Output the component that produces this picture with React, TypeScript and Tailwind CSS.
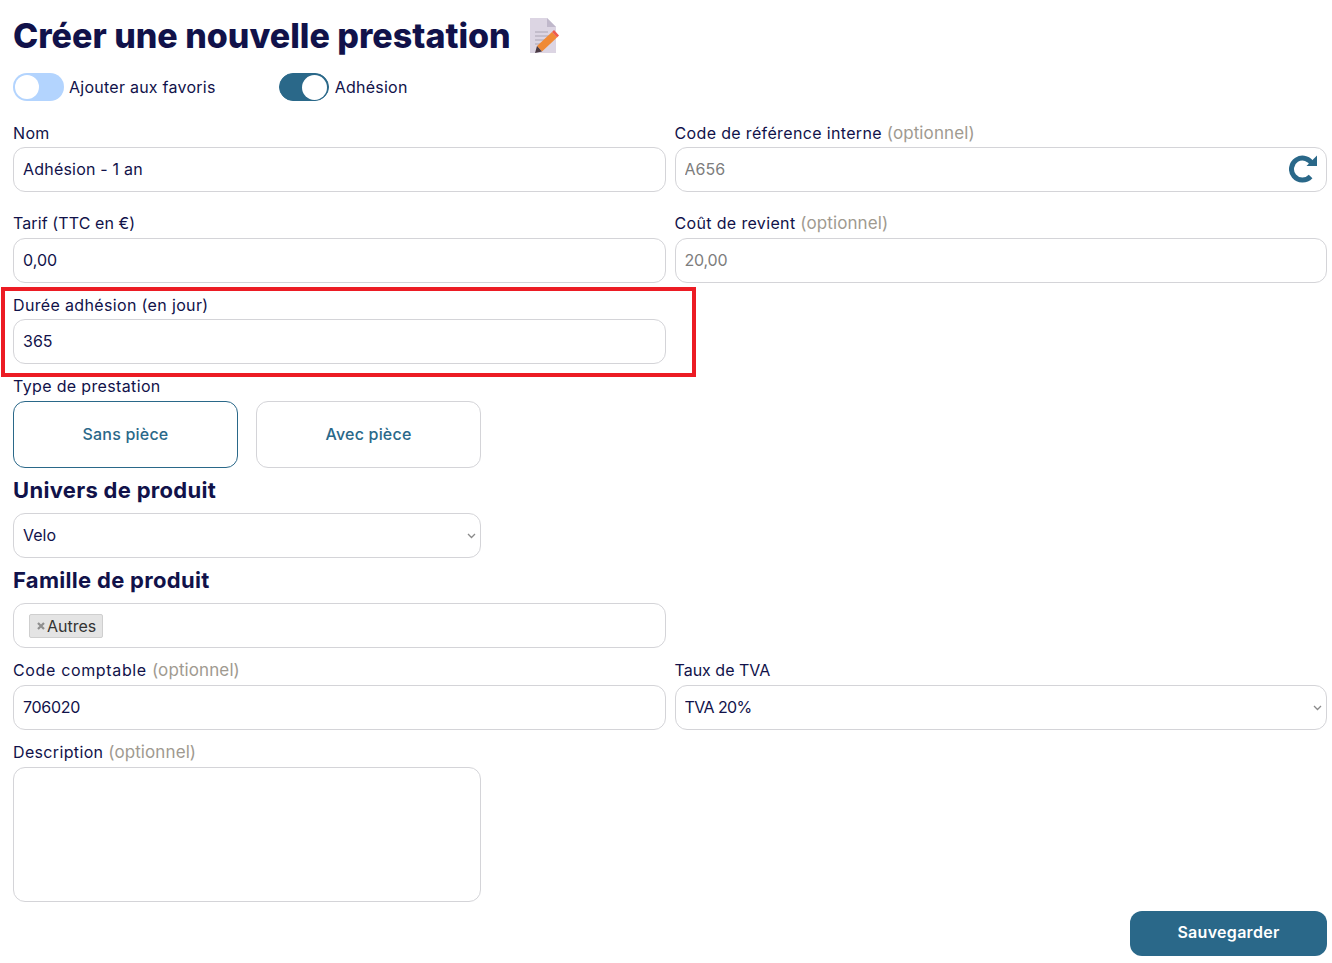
import React from "react";

const inputClass =
  "block w-full h-[45px] rounded-xl border border-[#d4d4d8] bg-white pl-[9px] pr-[10px] pb-[2px] text-[16px] text-[#11124a] placeholder:text-[#7d7d7d] outline-none";

const Optional: React.FC = () => (
  <span className="text-[17px] tracking-[0.1px] text-[#a09a90]"> (optionnel)</span>
);

const Label: React.FC<{ children: React.ReactNode; className?: string }> = ({
  children,
  className,
}) => (
  <label className={`block h-6 leading-6 text-[16px] text-[#11124a] ${className ?? "tracking-[0.35px]"}`}>
    {children}
  </label>
);

const Toggle: React.FC<{ on?: boolean; label: string; className?: string }> = ({
  on,
  label,
  className,
}) => (
  <div className={`flex items-center gap-[5px] ${className ?? ""}`}>
    {on ? (
      <div className="mr-px flex h-7 w-[50px] items-center justify-end rounded-full border border-[#2a6889] bg-[#2a6889] pr-px">
        <div className="h-[25px] w-[25px] rounded-full bg-white" />
      </div>
    ) : (
      <div className="flex h-7 w-[51px] items-center rounded-full bg-[#b3d4fe] pl-[2px]">
        <div className="h-6 w-6 rounded-full bg-white" />
      </div>
    )}
    <span className="text-[16px] tracking-[0.25px] text-[#11124a]">{label}</span>
  </div>
);

const Chevron: React.FC = () => (
  <svg
    className="pointer-events-none absolute right-[5px] top-1/2 -translate-y-1/2"
    width="9"
    height="6"
    viewBox="0 0 9 6"
    fill="none"
  >
    <path d="M1 1l3.5 3.5L8 1" stroke="#8a8a8a" strokeWidth="1.3" />
  </svg>
);

const SelectBox: React.FC<{ value: string; className?: string }> = ({ value, className }) => (
  <div className="relative">
    <select className={`${inputClass} appearance-none ${className ?? ""}`} defaultValue={value}>
      <option>{value}</option>
    </select>
    <Chevron />
  </div>
);

const NoteIcon: React.FC = () => (
  <svg width="30" height="36" viewBox="0 0 30 36" fill="none">
    <path d="M0 0h17l9 9v26H0z" fill="#dcd5e3" />
    <path d="M17 0l9 9h-9z" fill="#c0b8cb" />
    <path d="M5 14h13M5 18h14M5 22h12M5 26h8" stroke="#aaa4b3" strokeWidth="1" />
    <path d="M7 28L22 14l5 5.5L12 33.5z" fill="#f08a36" />
    <path d="M22 14l2-2 5 5.5-2 2z" fill="#ef5b4c" />
    <path d="M7 28l5 5.5-7 1.5z" fill="#4a3a44" />
  </svg>
);

const RefreshIcon: React.FC = () => (
  <svg
    className="absolute right-[10px] top-[8px]"
    width="28"
    height="28"
    viewBox="0 0 28 28"
    fill="none"
  >
    <path d="M23.5 9.5A11 11 0 1 0 21.6 21.5" stroke="#2a6889" strokeWidth="5" />
    <path d="M17.5 11H28V0.5z" fill="#2a6889" />
  </svg>
);

const App: React.FC = () => {
  return (
    <div className="min-h-[963px] bg-white pl-[13px] pr-[5px] font-['Inter','Noto_Sans',sans-serif] text-[#11124a]">
      <div className="flex h-[71px] items-center">
        <h1 className="w-[499px] whitespace-nowrap text-[34px] font-extrabold leading-none text-[#11124a]">
          Créer une nouvelle prestation
        </h1>
        <div className="ml-[18px]">
          <NoteIcon />
        </div>
      </div>

      <div className="mt-[2px] flex h-7 items-center">
        <Toggle label="Ajouter aux favoris" />
        <Toggle on label="Adhésion" className="ml-[63px]" />
      </div>

      <div className="mt-5 grid grid-cols-2 gap-x-[9px]">
        <div>
          <Label>Nom</Label>
          <input className={`${inputClass} mt-[2px] tracking-[0.2px]`} defaultValue="Adhésion - 1 an" />
        </div>
        <div>
          <Label>
            Code de référence interne <Optional />
          </Label>
          <div className="relative mt-[2px]">
            <input className={inputClass} placeholder="A656" />
            <RefreshIcon />
          </div>
        </div>
      </div>

      <div className="mt-[19px] grid grid-cols-2 gap-x-[9px]">
        <div>
          <Label className="tracking-[0.1px]">Tarif (TTC en €)</Label>
          <input className={`${inputClass} mt-[3px]`} defaultValue="0,00" />
        </div>
        <div>
          <Label>
            Coût de revient <Optional />
          </Label>
          <input className={`${inputClass} mt-[3px] tracking-[-0.2px]`} placeholder="20,00" />
        </div>
      </div>

      <div className="relative mt-[10px] grid grid-cols-2 gap-x-[9px]">
        <div>
          <Label>Durée adhésion (en jour)</Label>
          <input className={`${inputClass} mt-[2px]`} defaultValue="365" />
        </div>
        <div className="pointer-events-none absolute left-[-12px] top-[-6px] h-[90px] w-[695px] border-4 border-[#ec1c24]" />
      </div>

      <div className="mt-[10px]">
        <Label>Type de prestation</Label>
        <div className="mt-[3px] flex w-[468px] gap-[18px]">
          <button className="h-[67px] w-[225px] rounded-xl border border-[#2a6889] bg-white pb-[2px] text-[16px] font-medium tracking-[0.2px] text-[#2a6889]">
            Sans pièce
          </button>
          <button className="h-[67px] w-[225px] rounded-xl border border-[#d4d4d8] bg-white pb-[2px] text-[16px] font-medium tracking-[0.2px] text-[#2a6889]">
            Avec pièce
          </button>
        </div>
      </div>

      <h2 className="mt-2 h-[37px] text-[22px] font-bold leading-[29px] tracking-[0.3px] text-[#11124a]">
        Univers de produit
      </h2>
      <div className="w-[468px]">
        <SelectBox value="Velo" />
      </div>

      <h2 className="mt-2 h-[37px] text-[22px] font-bold leading-[29px] tracking-[0.3px] text-[#11124a]">
        Famille de produit
      </h2>
      <div className="grid grid-cols-2 gap-x-[9px]">
        <div className="flex h-[45px] items-center rounded-xl border border-[#d4d4d8] bg-white pl-[15px]">
          <span className="flex h-6 items-center gap-[2px] rounded-[2px] border border-[#cfcfcf] bg-[#e4e4e4] pl-[7px] pr-[6px] text-[16px] text-[#333333]">
            <svg width="8" height="8" viewBox="0 0 8 8" fill="none">
              <path d="M1 1l6 6M7 1L1 7" stroke="#8f8f8f" strokeWidth="2.2" />
            </svg>
            Autres
          </span>
        </div>
      </div>

      <div className="mt-[10px] grid grid-cols-2 gap-x-[9px]">
        <div>
          <Label className="tracking-[0.65px]">
            Code comptable <Optional />
          </Label>
          <input className={`${inputClass} mt-[3px] tracking-[-0.3px]`} defaultValue="706020" />
        </div>
        <div>
          <Label className="tracking-[0px]">Taux de TVA</Label>
          <div className="mt-[3px]">
            <SelectBox value="TVA 20%" className="tracking-[-0.6px]" />
          </div>
        </div>
      </div>

      <div className="mt-[10px]">
        <Label>
          Description <Optional />
        </Label>
        <textarea className="mt-[3px] block h-[135px] w-[468px] resize-none rounded-xl border border-[#d4d4d8] bg-white outline-none" />
      </div>

      <div className="mt-[9px] flex justify-end">
        <button className="h-[45px] w-[197px] rounded-xl bg-[#2a6889] pb-[3px] text-[16px] font-semibold tracking-[0.3px] text-white">
          Sauvegarder
        </button>
      </div>
    </div>
  );
};

export default App;
